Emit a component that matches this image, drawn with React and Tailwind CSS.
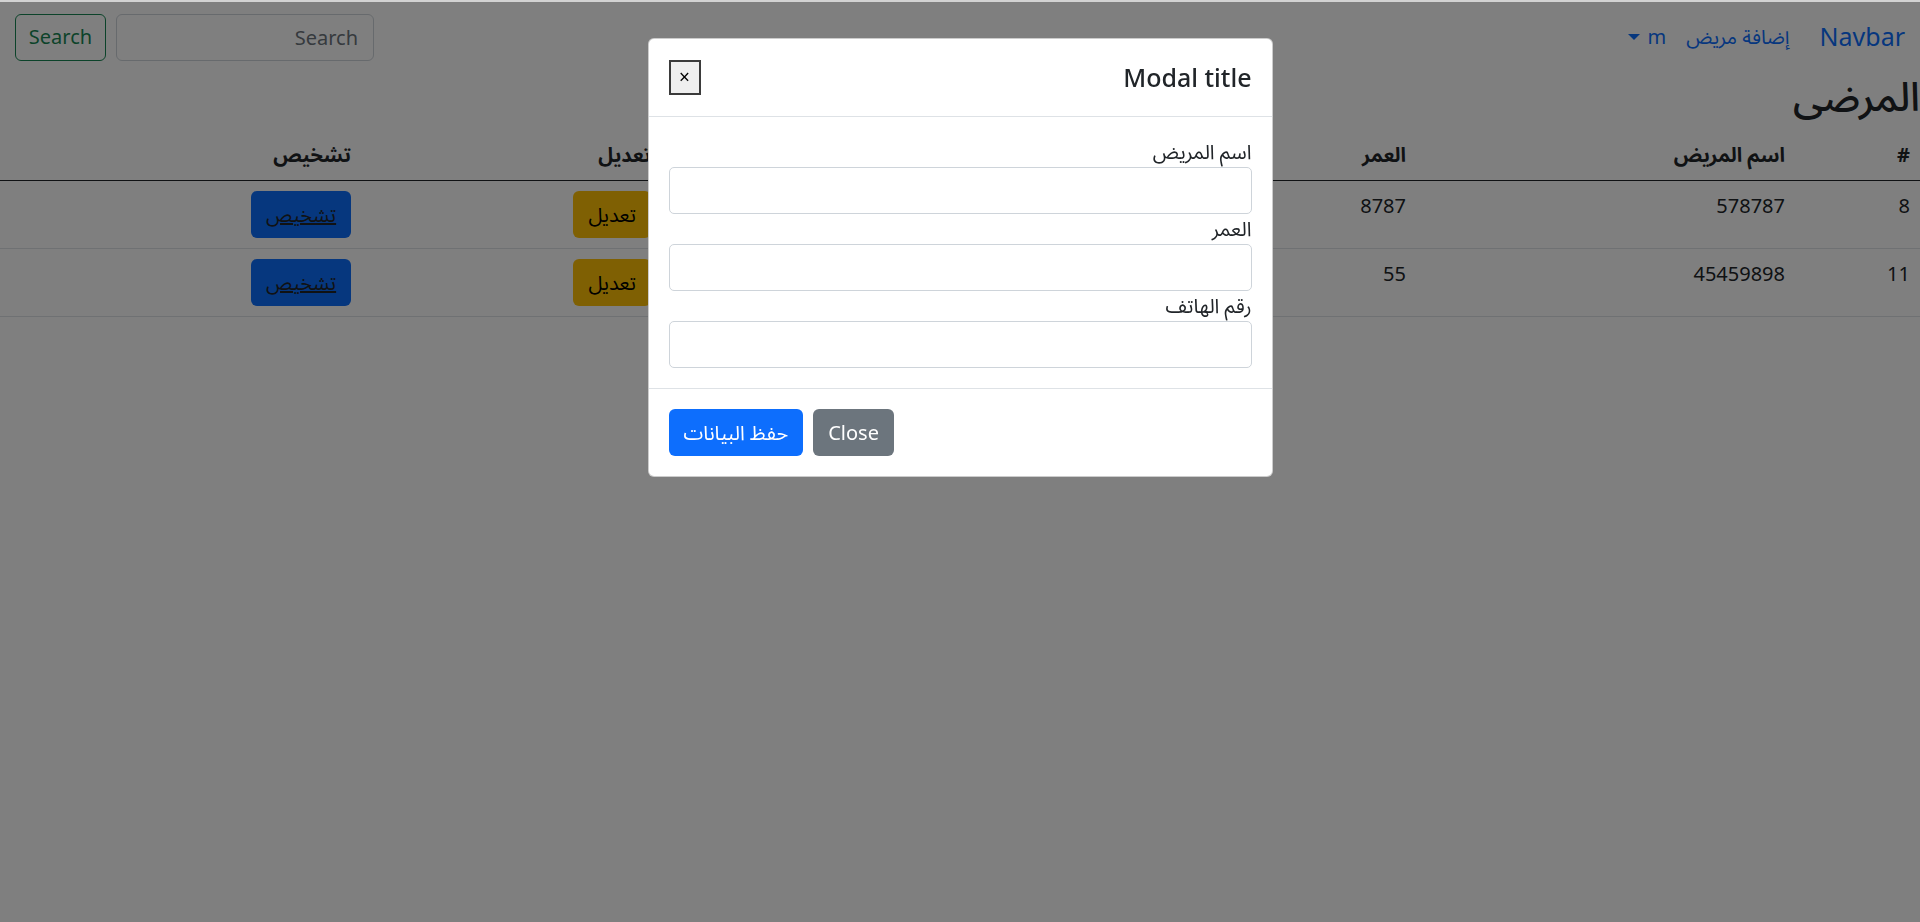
import React from 'react';

const patients = [
  { id: 8, name: '578787', age: '8787', phone: '0599' },
  { id: 11, name: '45459898', age: '55', phone: '0598' },
];

const font = "font-['Noto_Sans','Noto_Sans_Arabic','DejaVu_Sans',sans-serif]";

function Navbar() {
  return (
    <nav className="flex h-[70px] items-center justify-between px-[15px]">
      <div className="flex items-center">
        <a className="ml-[20px] text-[25px] leading-[1.5] text-[#0d6efd]">Navbar</a>
        <a className="px-[10px] py-[10px] text-[20px] leading-[1.5] text-[#0d6efd]">إضافة مريض</a>
        <a className="flex items-center px-[10px] py-[10px] text-[20px] leading-[1.5] text-[#0d6efd]">
          m
          <span className="mr-[8px] inline-block h-0 w-0 border-x-[6px] border-t-[6px] border-x-transparent border-t-[#0d6efd]" />
        </a>
      </div>
      <form className="flex items-center">
        <input
          className="ml-[10px] h-[47px] w-[258px] rounded-[6px] border border-[#ced4da] bg-white px-[15px] text-[20px] text-[#212529] placeholder:text-[#6c757d]"
          placeholder="Search"
        />
        <button
          type="button"
          className="h-[47px] w-[91px] rounded-[6px] border border-[#198754] text-[20px] text-[#198754]"
        >
          Search
        </button>
      </form>
    </nav>
  );
}

function PatientsTable() {
  return (
    <table className="w-full table-fixed border-collapse text-right text-[20px] leading-[1.5]">
      <thead>
        <tr className="border-b border-[#212529]">
          <th className="w-[125px] p-[10px] font-bold">#</th>
          <th className="w-[379px] p-[10px] font-bold">اسم المريض</th>
          <th className="w-[378px] p-[10px] font-bold">العمر</th>
          <th className="w-[377px] p-[10px] font-bold">رقم الهاتف</th>
          <th className="w-[300px] p-[10px] font-bold">تعديل</th>
          <th className="p-[10px] font-bold">تشخيص</th>
        </tr>
      </thead>
      <tbody>
        {patients.map((p) => (
          <tr key={p.id} className="border-b border-[#dee2e6] align-top">
            <td className="p-[10px]">{p.id}</td>
            <td className="p-[10px]">{p.name}</td>
            <td className="p-[10px]">{p.age}</td>
            <td className="p-[10px]">{p.phone}</td>
            <td className="p-[10px]">
              <button type="button" className="h-[47px] rounded-[6px] bg-[#ffc107] px-[15px] text-[20px] text-black">
                تعديل
              </button>
            </td>
            <td className="p-[10px]">
              <button type="button" className="h-[47px] w-[100px] rounded-[6px] bg-[#0d6efd] text-[20px]">
                <a className="text-[#212529] underline">تشخيص</a>
              </button>
            </td>
          </tr>
        ))}
      </tbody>
    </table>
  );
}

function Field({ label }) {
  return (
    <div>
      <label className="block text-[20px] leading-[30px]">{label}</label>
      <input className="block h-[47px] w-full rounded-[5px] border border-[#ced4da] bg-white px-[15px] text-[20px]" />
    </div>
  );
}

function Modal() {
  return (
    <div className="fixed inset-x-0 bottom-0 top-[2px] bg-black/50">
      <div className="mx-auto mt-[36px] w-[625px] rounded-[6px] border border-black/20 bg-white text-[#212529]">
        <div className="flex items-center justify-between border-b border-[#dee2e6] p-[20px]">
          <h5 className="text-[25px] font-medium leading-[37px]">Modal title</h5>
          <button
            type="button"
            className="flex h-[35px] w-[32px] items-center justify-center border-2 border-[#3b3b3b] bg-[#efefef] text-[19px] leading-none text-black"
          >
            ×
          </button>
        </div>
        <div className="p-[20px]">
          <Field label="اسم المريض" />
          <Field label="العمر" />
          <Field label="رقم الهاتف" />
        </div>
        <div className="flex justify-end gap-[10px] border-t border-[#dee2e6] px-[20px] py-[20px]">
          <button type="button" className="h-[47px] rounded-[6px] bg-[#6c757d] px-[15px] text-[20px] text-white">
            Close
          </button>
          <button type="button" className="h-[47px] rounded-[6px] bg-[#0d6efd] px-[15px] text-[20px] text-white">
            حفظ البيانات
          </button>
        </div>
      </div>
    </div>
  );
}

export default function App() {
  return (
    <div dir="rtl" className={`min-h-[922px] bg-white text-[#212529] ${font}`}>
      <div className="h-[2px] bg-[#d2d2d2]" />
      <Navbar />
      <h2 className="mb-[10px] text-[40px] font-medium leading-[1.2]">المرضى</h2>
      <PatientsTable />
      <Modal />
    </div>
  );
}
